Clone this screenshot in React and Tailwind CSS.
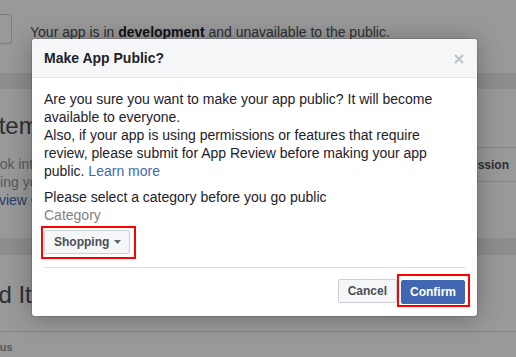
import React from "react";

export default function App() {
  return (
    <div className="relative h-[357px] w-[516px] overflow-hidden bg-white font-['Liberation_Sans',Arial,sans-serif]">
      {/* Background page */}
      <div className="flex h-[73px] items-start">
        <div className="-ml-[8px] mt-[14px] h-[30px] w-[20px] shrink-0 rounded-[3px] border border-[#ccd0d5] bg-white" />
        <p className="ml-[18px] mt-[23px] whitespace-nowrap text-[14px] leading-[18px] text-[#4b4f56]">
          Your app is in <b className="text-[#1d2129]">development</b> and unavailable to the public.
        </p>
      </div>
      <div className="h-[16px] bg-[#e9ebee]" />
      <div className="flex h-[149px]">
        <div className="w-[200px] shrink-0 pt-[23px]">
          <h2 className="-ml-[8px] whitespace-nowrap text-[24px] leading-[28px] text-[#4b4f56]">Items</h2>
          <div className="mt-[15px] text-[14px] leading-[18px] text-[#90949c]">
            <p className="-ml-[47px] whitespace-nowrap">Facebook integrations</p>
            <p className="-ml-[17px] whitespace-nowrap">Using your app</p>
            <p className="-ml-[19px] whitespace-nowrap text-[#4267b2]">Review Guidelines</p>
          </div>
        </div>
        <div className="flex-1 pt-[58px]">
          <div className="flex h-[35px] items-center justify-end border-y border-[#dddfe2] pr-[7px]">
            <span className="text-[12px] font-bold text-[#4b4f56]">Permission</span>
          </div>
        </div>
      </div>
      <div className="h-[17px] bg-[#e9ebee]" />
      <div className="h-[77px] border-b border-[#dddfe2] pt-[26px]">
        <h2 className="-ml-[91px] whitespace-nowrap text-[24px] leading-[28px] text-[#4b4f56]">Approved Items</h2>
      </div>
      <div className="pt-[8px]">
        <span className="-ml-[21px] block whitespace-nowrap text-[11px] font-bold leading-[14px] text-[#90949c]">Status</span>
      </div>

      {/* Overlay */}
      <div className="absolute inset-0 bg-[rgba(0,0,0,0.4)]" />

      {/* Dialog */}
      <div className="absolute left-[32px] top-[39px] w-[445px] rounded-[3px] bg-white shadow-[0_2px_26px_rgba(0,0,0,0.3),0_0_0_1px_rgba(0,0,0,0.1)]">
        <div className="flex h-[39px] items-center justify-between rounded-t-[3px] border-b border-[#e5e5e5] bg-[#f5f6f7] pl-3 pr-[13px]">
          <span className="text-[14px] font-bold leading-[18px] text-[#1d2129]">Make App Public?</span>
          <svg width="10" height="10" viewBox="0 0 10 10" className="mt-[1px]">
            <path d="M1 1L9 9M9 1L1 9" stroke="#bec2c9" strokeWidth="2" />
          </svg>
        </div>
        <div className="px-3 pt-3 text-[14px] leading-[18px] text-[#1d2129]">
          <p>
            Are you sure you want to make your app public? It will become available to everyone.
            <br />
            Also, if your app is using permissions or features that require review, please submit for App Review before making your app public.{" "}
            <a className="text-[#4267b2]">Learn more</a>
          </p>
          <p className="mt-2">Please select a category before you go public</p>
          <p className="text-[#7f8186]">Category</p>
          <div className="mt-[6px] flex">
            <div className="relative">
              <button className="flex h-[24px] items-center gap-[5px] rounded-[2px] border border-[#ccd0d5] bg-[#f5f6f7] pl-[9px] pr-[8px] text-[12px] font-bold text-[#4b4f56]">
                Shopping
                <svg width="7" height="4" viewBox="0 0 7 4">
                  <path d="M0 0H7L3.5 4Z" fill="#606770" />
                </svg>
              </button>
              <div className="pointer-events-none absolute -bottom-[5px] -left-[3px] -right-[6px] -top-[4px] border-2 border-[#ff0000]" />
            </div>
          </div>
        </div>
        <div className="mx-3 mt-[13px] flex justify-end gap-1 border-t border-[#dddfe2] pb-3 pt-[11px]">
          <button className="h-[24px] rounded-[2px] border border-[#ccd0d5] bg-[#f5f6f7] px-[9px] text-[12px] font-bold text-[#4b4f56]">
            Cancel
          </button>
          <div className="relative">
            <button className="h-[24px] rounded-[2px] border border-[#4267b2] bg-[#4267b2] px-2 text-[12px] font-bold text-white">
              Confirm
            </button>
            <div className="pointer-events-none absolute -bottom-[3px] -left-[4px] -right-[5px] -top-[5px] border-2 border-[#ff0000]" />
          </div>
        </div>
      </div>
    </div>
  );
}
